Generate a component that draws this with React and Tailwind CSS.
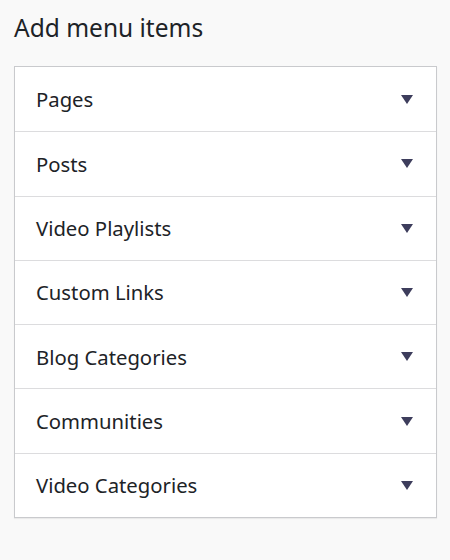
import React from 'react';

const items = ['Pages', 'Posts', 'Video Playlists', 'Custom Links', 'Blog Categories', 'Communities', 'Video Categories'];

function Caret() {
  return (
    <svg width="12" height="9" viewBox="0 0 12 9" className="shrink-0">
      <path d="M0 0h12L6 9z" fill="#3d3d5c" />
    </svg>
  );
}

export default function App() {
  return (
    <div className="min-h-[560px] bg-[#f9f9f9] px-[14px] pt-[12px]" style={{ fontFamily: '"Noto Sans", "Open Sans", sans-serif' }}>
      <h2 className="text-[24.5px] leading-[32px] font-normal text-[#1d2327]">Add menu items</h2>
      <div className="mt-[22px] w-[423px] border border-[#c9cacd] bg-white shadow-[0_1px_1px_rgba(0,0,0,0.06)]">
        {items.map((label, i) => (
          <div
            key={label}
            className={`flex h-[64.3px] items-center justify-between pl-[21px] pr-[23px] ${i > 0 ? 'border-t border-[#dcdcde]' : ''}`}
          >
            <span className="text-[20.3px] text-[#1d2327]">{label}</span>
            <Caret />
          </div>
        ))}
      </div>
    </div>
  );
}
